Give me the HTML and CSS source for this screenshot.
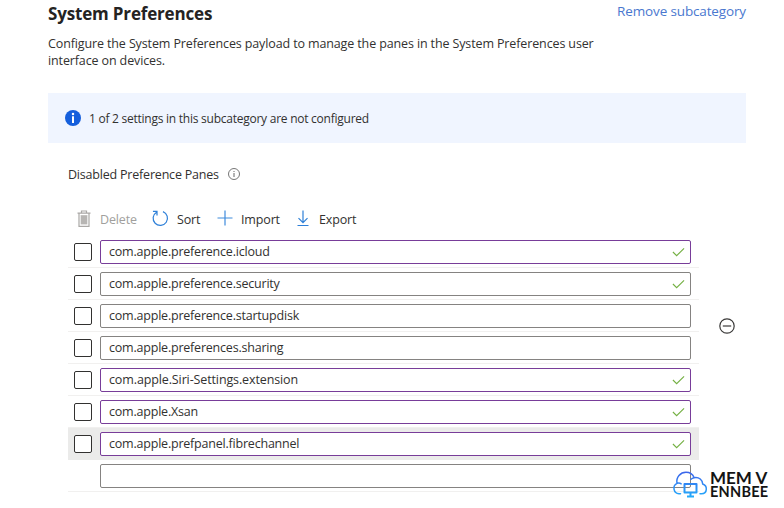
FILE: index.html
```html
<!DOCTYPE html>
<html lang="en">
<head>
<meta charset="utf-8">
<title>System Preferences</title>
<link rel="stylesheet" href="styles.css">
</head>
<body>
<main class="panel">
  <header class="header">
    <h1 class="title">System Preferences</h1>
    <a class="remove">Remove subcategory</a>
  </header>
  <p class="description">Configure the System Preferences payload to manage the panes in the System Preferences user<br>interface on devices.</p>
  <div class="banner">
    <svg class="banner-icon" viewBox="0 0 16 16"><circle cx="8" cy="8" r="8" fill="#155fdc"/><circle cx="8" cy="4" r="1.25" fill="#fff"/><path d="M7 6.3h2V13H7z" fill="#fff"/></svg>
    <span class="banner-text">1 of 2 settings in this subcategory are not configured</span>
  </div>
  <div class="label">
    <span>Disabled Preference Panes</span>
    <svg class="label-icon" viewBox="0 0 12 12"><circle cx="6" cy="6" r="5.5" fill="none" stroke="#666" stroke-width=".9"/><path d="M6 5v4M6 3v1" stroke="#666" stroke-width="1"/></svg>
  </div>
  <div class="setting">
    <div class="editor">
      <div class="toolbar">
        <span class="command delete"><svg class="i-trash" viewBox="0 0 14 18"><path d="M.5 3.2h13M4.5 3V1h5v2M2 3.5v12.8h10V3.5" fill="none" stroke="#aaa8a6" stroke-width="1.2"/><path d="M3.6 5h6.8v9.5H3.600z" fill="#c4c2c0"/><path d="M5 6v8M7 6v8M9 6v8" stroke="#aaa8a6"/></svg>Delete</span>
        <span class="command sort"><svg class="i-sort" viewBox="0 0 18 18"><path d="M11.6 1.7A7.6 7.6 0 1 1 4.8 2.3M1 1.400h4.300v4.400" fill="none" stroke="#2f80d8" stroke-width="1.3"/></svg>Sort</span>
        <span class="command import"><svg class="i-plus" viewBox="0 0 16 16"><path d="M8 .5v15M.5 8h15" stroke="#3f8bdc" stroke-width="1.2"/></svg>Import</span>
        <span class="command export"><svg class="i-down" viewBox="0 0 12 17"><path d="M6 .5v12M1.5 8.2 6 12.7l4.5-4.5M.5 15.5h11" fill="none" stroke="#2f80d8" stroke-width="1.2"/></svg>Export</span>
      </div>
      <div class="rows">
        <div class="row"><i class="checkbox"></i><div class="field edited"><span>com.apple.preference.icloud</span><svg class="check" viewBox="0 0 14 10"><path d="M1 5l4 4 8-8"/></svg></div></div>
        <div class="row"><i class="checkbox"></i><div class="field"><span>com.apple.preference.security</span><svg class="check" viewBox="0 0 14 10"><path d="M1 5l4 4 8-8"/></svg></div></div>
        <div class="row"><i class="checkbox"></i><div class="field"><span>com.apple.preference.startupdisk</span></div></div>
        <div class="row"><i class="checkbox"></i><div class="field"><span>com.apple.preferences.sharing</span></div></div>
        <div class="row"><i class="checkbox"></i><div class="field edited"><span class="looser">com.apple.Siri-Settings.extension</span><svg class="check" viewBox="0 0 14 10"><path d="M1 5l4 4 8-8"/></svg></div></div>
        <div class="row"><i class="checkbox"></i><div class="field edited"><span>com.apple.Xsan</span><svg class="check" viewBox="0 0 14 10"><path d="M1 5l4 4 8-8"/></svg></div></div>
        <div class="row active"><i class="checkbox"></i><div class="field edited"><span>com.apple.prefpanel.fibrechannel</span><svg class="check" viewBox="0 0 14 10"><path d="M1 5l4 4 8-8"/></svg></div></div>
        <div class="row"><div class="field empty"></div></div>
      </div>
    </div>
    <svg class="minus" viewBox="0 0 16 16"><circle cx="8" cy="8" r="7.200" fill="none" stroke="#3b3a39" stroke-width="1.2"/><path d="M3.8 8h8.4" stroke="#3b3a39" stroke-width="1.2"/></svg>
  </div>
</main>
<div class="watermark">
  <svg class="cloud" viewBox="0 0 34 27">
    <defs><linearGradient id="g" x1="0" y1="0" x2="0" y2="27" gradientUnits="userSpaceOnUse"><stop offset="0" stop-color="#3d62ea"/><stop offset="1" stop-color="#22aefc"/></linearGradient></defs>
    <path d="M7.500 22.800H6A5.500 5.500 0 0 1 4 12.400C2.800 6 7.500 1.200 13 1.200c4.400 0 7 2.600 8.200 5.500 5-.8 8.300 2.200 8.500 6.300 2.500.8 3.800 2.800 3.600 5.400-.2 2.900-2.300 4.400-4.800 4.400H27M4 12.400c1.400-.5 2.900-.4 4.200.4M17.900 8.400c.7-.9 1.900-1.500 3.300-1.700" fill="none" stroke="url(#g)" stroke-width="1.5" stroke-linecap="round"/>
    <path d="M11.500 13h12v8.500h-12zM17.500 21.500v3.500M14 25.600h7" fill="none" stroke="url(#g)" stroke-width="2" stroke-linejoin="round"/>
  </svg>
  <div class="brand"><span class="brand-top">MEM V</span><span class="brand-bottom">ENNBEE</span></div>
</div>
</body>
</html>
```
FILE: styles.css
```css
* { box-sizing: border-box; }
body {
  margin: 0;
  height: 508px;
  overflow: hidden;
  background: #fff;
  color: #323130;
  font: 12.5px/17px "Open Sans", "Noto Sans", sans-serif;
}
svg { display: block; flex: none; overflow: visible; }
span, a { white-space: nowrap; }
.panel { width: 698px; margin-left: 48px; }
.header { display: flex; justify-content: space-between; height: 35px; }
.title { margin: 2px 0 0; font-size: 17px; line-height: 24px; font-weight: 700; color: #242322; letter-spacing: -.17px; }
.remove { margin-top: 2px; font-size: 13.5px; line-height: 19px; color: #4a78cf; letter-spacing: -.14px; }
.description { margin: 0 0 24px; line-height: 17px; letter-spacing: -.125px; }
.banner { display: flex; align-items: center; height: 50px; padding-left: 17px; gap: 8px; background: #f0f5ff; }
.banner-icon { width: 16px; height: 16px; }
.banner-text { font-size: 12px; letter-spacing: -.25px; }
.label { display: flex; align-items: center; gap: 9px; height: 20px; margin: 21px 0 0 20px; letter-spacing: -.2px; }
.label-icon { width: 12px; height: 12px; }
.setting { display: flex; align-items: flex-start; margin: 18px 0 0 20px; width: 670px; }
.editor { width: 631px; }
.toolbar { display: flex; height: 34px; padding-left: 9px; letter-spacing: -.15px; }
.command { display: flex; align-items: center; }
.delete { width: 75px; gap: 9px; color: #a19f9d; }
.sort { width: 65px; gap: 8px; }
.import { width: 80px; gap: 8px; }
.export { gap: 10px; }
.i-trash { width: 14px; height: 18px; }
.i-sort { width: 17px; height: 17px; margin-top: -2px; }
.i-plus { width: 16px; height: 16px; margin-top: -2px; }
.i-down { width: 12px; height: 17px; margin-top: -1px; }
.row { display: flex; align-items: center; height: 32px; padding: 0 8px 0 6px; gap: 8px; border-bottom: 1px solid #f1f0ef; letter-spacing: -.21px; }
.active { background: #ebebea; border-color: #ebebea; }
.looser { letter-spacing: -.12px; }
.checkbox { width: 18px; height: 18px; border: 1px solid #323130; border-radius: 2px; background: #fff; }
.field { display: flex; align-items: center; flex: 1; height: 24px; padding: 0 5px 1px 8px; border: 1px solid #858381; border-radius: 2px; background: #fff; }
.edited { border-color: #783d99; }
.empty { margin-left: 26px; }
.check { width: 13px; height: 10px; margin: 1px 0 0 auto; }
.check path { fill: none; stroke: #74b043; stroke-width: 1.2; }
.minus { width: 16px; height: 16px; margin: 116px 0 0 19.500px; }
.watermark { position: absolute; left: 673px; top: 471px; display: flex; gap: 3px; }
.cloud { width: 34px; height: 27px; }
.brand { display: flex; flex-direction: column; color: #141414; font-family: Lato, sans-serif; font-weight: 700; }
.brand-top { font-size: 17px; line-height: 14px; }
.brand-bottom { font-size: 14.500px; line-height: 13px; letter-spacing: .25px; }
```
